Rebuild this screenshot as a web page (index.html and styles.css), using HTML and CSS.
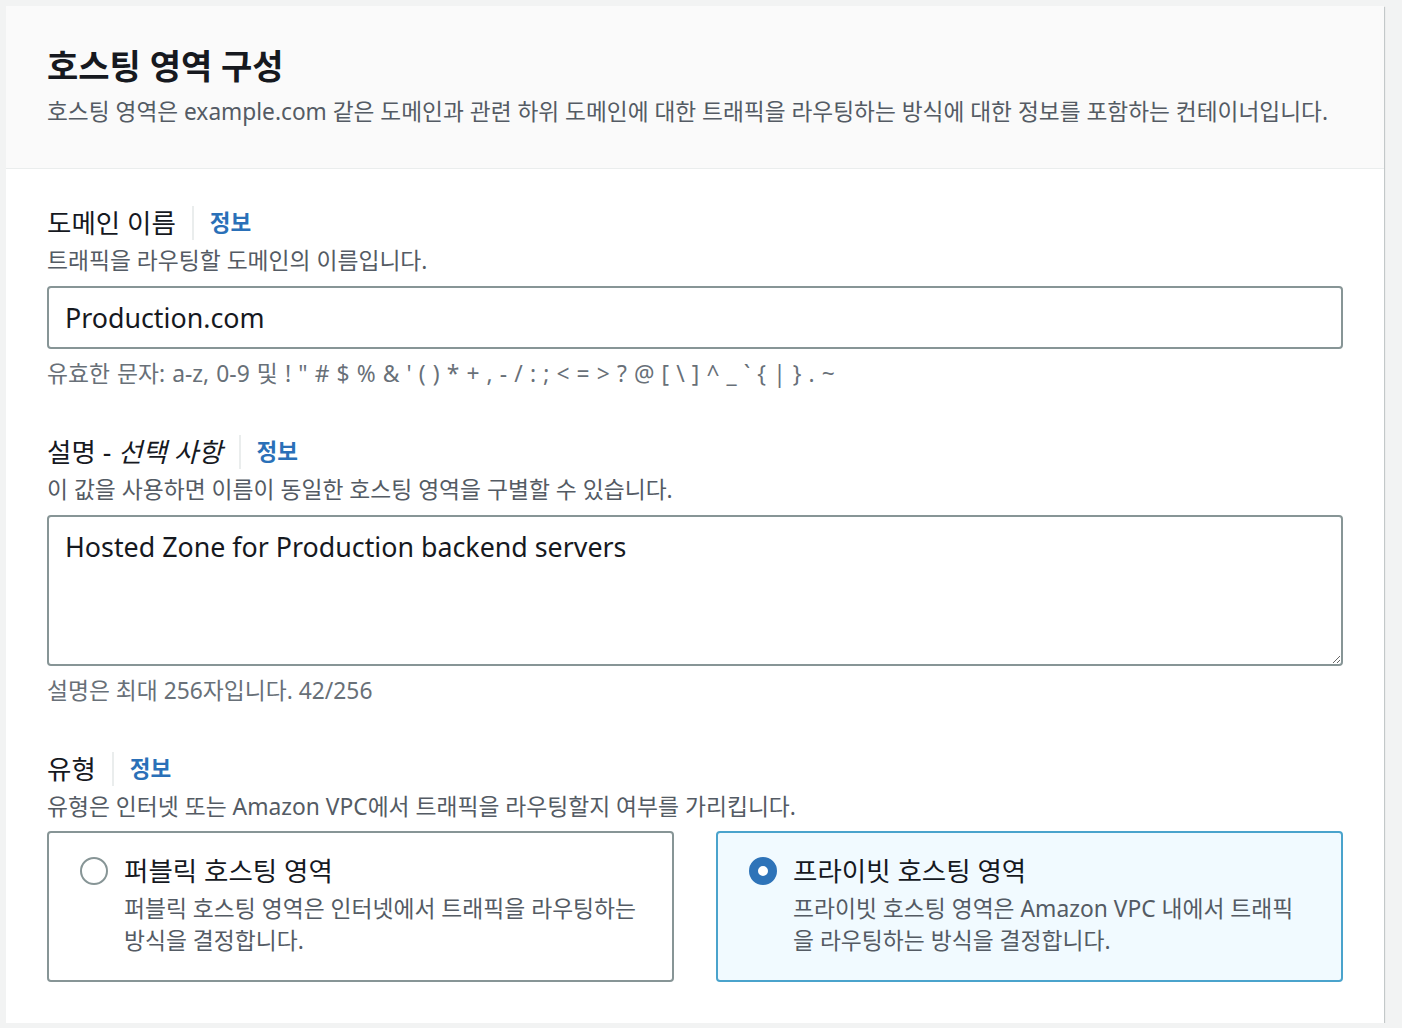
FILE: index.html
```html
<!DOCTYPE html>
<html lang="ko">
<head>
<meta charset="utf-8"/>
<title>호스팅 영역 구성</title>
<meta name="viewport" content="width=device-width">
<link rel="stylesheet" href="styles.css">
</head>
<body>
<form class="panel" autocomplete="off">
	<header class="panel-header">
		<h2>호스팅 영역 구성</h2>
		<p>호스팅 영역은 example.com 같은 도메인과 관련 하위 도메인에 대한 트래픽을 라우팅하는 방식에 대한 정보를 포함하는 컨테이너입니다.</p>
	</header>
	<div class="panel-body">
		<div class="field">
			<div class="field-label"><label for="domain">도메인 이름</label><a class="info" href="#">정보</a></div>
			<div class="field-desc">트래픽을 라우팅할 도메인의 이름입니다.</div>
			<input id="domain" class="text-input" type="text" value="Production.com">
			<div class="field-hint chars">유효한 문자: a-z, 0-9 및 ! " # $ % &amp; ' ( ) * + , - / : ; &lt; = &gt; ? @ [ \ ] ^ _ ` { | } . ~</div>
		</div>
		<div class="field">
			<div class="field-label"><label for="description">설명 - <i>선택 사항</i></label><a class="info" href="#">정보</a></div>
			<div class="field-desc">이 값을 사용하면 이름이 동일한 호스팅 영역을 구별할 수 있습니다.</div>
			<textarea id="description" class="text-area">Hosted Zone for Production backend servers</textarea>
			<div class="field-hint">설명은 최대 256자입니다. 42/256</div>
		</div>
		<div class="field">
			<div class="field-label"><label>유형</label><a class="info" href="#">정보</a></div>
			<div class="field-desc">유형은 인터넷 또는 Amazon VPC에서 트래픽을 라우팅할지 여부를 가리킵니다.</div>
			<div class="tiles">
				<label class="tile">
					<input type="radio" name="type" value="public">
					<span class="radio"></span>
					<span class="tile-text">
						<span class="tile-title">퍼블릭 호스팅 영역</span>
						<span class="tile-desc">퍼블릭 호스팅 영역은 인터넷에서 트래픽을 라우팅하는 방식을 결정합니다.</span>
					</span>
				</label>
				<label class="tile selected">
					<input type="radio" name="type" value="private" checked>
					<span class="radio"></span>
					<span class="tile-text">
						<span class="tile-title">프라이빗 호스팅 영역</span>
						<span class="tile-desc">프라이빗 호스팅 영역은 Amazon VPC 내에서 트래픽을 라우팅하는 방식을 결정합니다.</span>
					</span>
				</label>
			</div>
		</div>
	</div>
</form>
</body>
</html>
```

FILE: styles.css
```css
html {
	background:#f2f3f3;
}
body {
	margin:6px;
	font:400 22.8px/30px "Noto Sans", "Noto Sans CJK KR", sans-serif;
	color:#16191f;
}
.panel {
	width:1378px;
	background:#fff;
	box-shadow:0 1px 1px 0 rgba(0,28,36,.3), 1px 1px 1px 0 rgba(0,28,36,.15), -1px 1px 1px 0 rgba(0,28,36,.15);
}
.panel-header {
	background:#fafafa;
	border-bottom:1px solid #eaeded;
	padding:40px 41px 41px;
}
.panel-header h2 {
	margin:0;
	font-size:34px;
	line-height:40px;
	font-weight:700;
}
.panel-header p {
	margin:11px 0 0;
	font-size:22.7px;
	color:#545b64;
}
.panel-body {
	padding:37px 41px 41px;
	display:flex;
	flex-direction:column;
	gap:46px;
}
.field {
	display:flex;
	flex-direction:column;
}
.field-label {
	display:flex;
	align-items:center;
	font-size:26.5px;
	line-height:34px;
}
.field-label label {
	padding-right:16px;
	border-right:2px solid #eaeded;
}
.field-label i {
	font-style:italic;
}
.info {
	padding-left:16px;
	font-size:22.5px;
	font-weight:700;
	color:#2a70b8;
	text-decoration:none;
}
.field-desc {
	margin-top:6px;
	color:#545b64;
}
.field-hint {
	margin-top:10px;
	color:#687078;
}
.field-hint.chars {
	word-spacing:1.2px;
}
.text-input,
.text-area {
	margin-top:10px;
	box-sizing:border-box;
	width:100%;
	border:2px solid #879596;
	border-radius:4px;
	font:400 26.8px/34px "Noto Sans", "Noto Sans CJK KR", sans-serif;
	color:#16191f;
	background:#fff;
	outline:none;
}
.text-input {
	height:63px;
	padding:0 16px;
}
.text-area {
	height:151px;
	padding:13px 16px;
	resize:vertical;
}
.tiles {
	margin-top:9px;
	display:grid;
	grid-template-columns:1fr 1fr;
	gap:42px;
}
.tile {
	display:flex;
	align-items:flex-start;
	gap:16px;
	min-height:151px;
	box-sizing:border-box;
	padding:21px 34px 23px 31px;
	border:2px solid #879596;
	border-radius:4px;
	cursor:pointer;
}
.tile.selected {
	border-color:#4aa3cc;
	background:#f1faff;
}
.tile input {
	display:none;
}
.radio {
	flex:none;
	margin-top:3px;
	width:28px;
	height:28px;
	box-sizing:border-box;
	border:2px solid #879596;
	border-radius:50%;
	background:#fff;
}
.tile.selected .radio {
	border:9px solid #2e73b8;
}
.tile-text {
	display:flex;
	flex-direction:column;
	gap:5px;
}
.tile-title {
	font-size:26.5px;
	line-height:34px;
}
.tile-desc {
	color:#545b64;
	line-height:32px;
}
```
